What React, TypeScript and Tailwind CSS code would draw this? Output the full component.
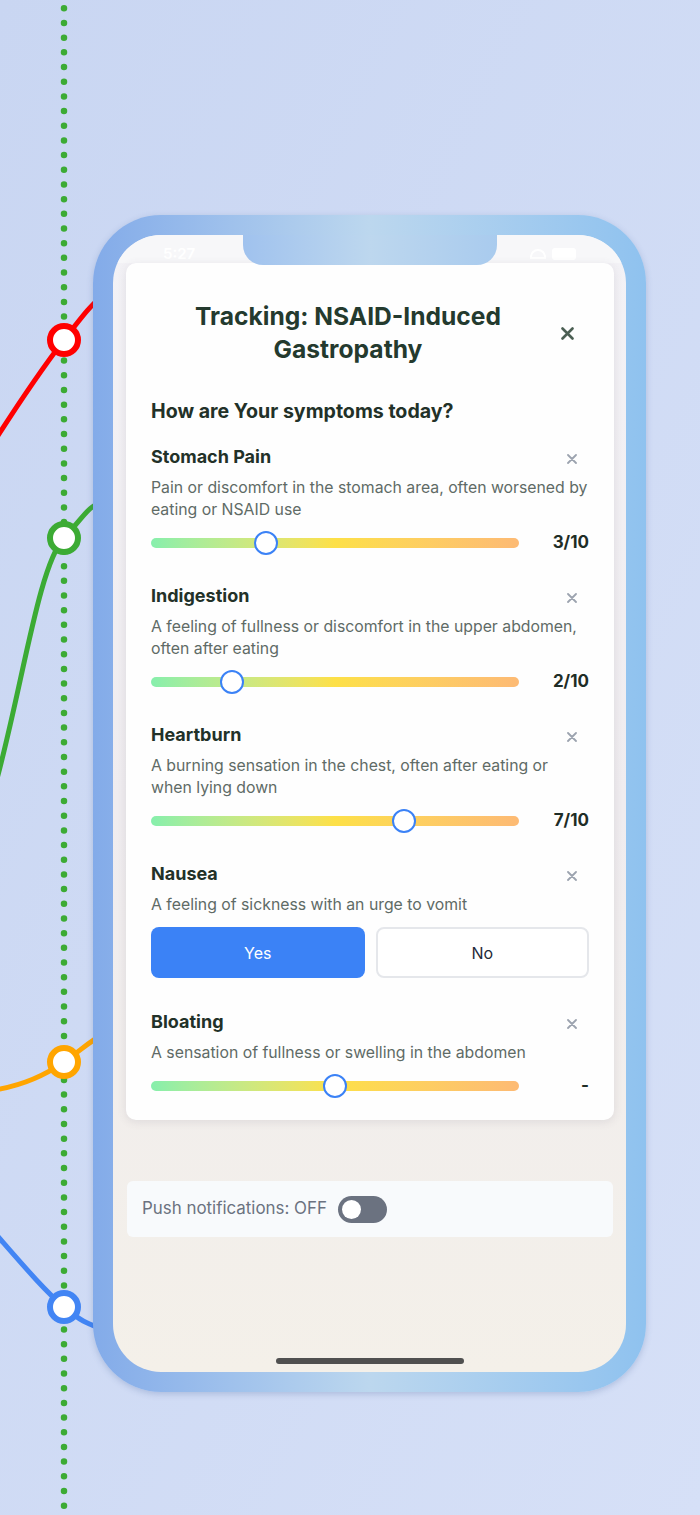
import React from 'react'

type Symptom = {
  name: string
  description: string
  kind: 'scale' | 'yesno'
  value: number | null
}

const symptoms: Symptom[] = [
  {
    name: 'Stomach Pain',
    description: 'Pain or discomfort in the stomach area, often worsened by eating or NSAID use',
    kind: 'scale',
    value: 3,
  },
  {
    name: 'Indigestion',
    description: 'A feeling of fullness or discomfort in the upper abdomen, often after eating',
    kind: 'scale',
    value: 2,
  },
  {
    name: 'Heartburn',
    description: 'A burning sensation in the chest, often after eating or when lying down',
    kind: 'scale',
    value: 7,
  },
  {
    name: 'Nausea',
    description: 'A feeling of sickness with an urge to vomit',
    kind: 'yesno',
    value: 1,
  },
  {
    name: 'Bloating',
    description: 'A sensation of fullness or swelling in the abdomen',
    kind: 'scale',
    value: null,
  },
]

const SmallX = () => (
  <svg width="10" height="10" viewBox="0 0 10 10" className="block">
    <path d="M1 1L9 9M9 1L1 9" stroke="#9ca3af" strokeWidth="1.8" strokeLinecap="round" />
  </svg>
)

const Backdrop = () => (
  <svg className="absolute inset-0" width="700" height="1515" viewBox="0 0 700 1515">
    <g fill="none" strokeWidth="5" strokeLinecap="round">
      <path d="M-10 448 C 18 404, 44 366, 64 340 S 90 306, 110 288" stroke="#ff0000" />
      <path d="M-6 790 C 22 690, 38 566, 64 538 S 86 506, 110 500" stroke="#3cab34" />
      <path d="M-6 1090 C 20 1086, 44 1076, 64 1062 S 88 1042, 110 1030" stroke="#ffa500" />
      <path d="M-6 1232 C 22 1264, 44 1290, 64 1307 S 90 1324, 110 1332" stroke="#4285f4" />
    </g>
    <line x1="64" y1="8.3" x2="64" y2="1515" stroke="#3cab34" strokeWidth="6.5" strokeLinecap="round" strokeDasharray="0 14.68" />
    <g fill="#ffffff" strokeWidth="6">
      <circle cx="64" cy="340" r="14" stroke="#ff0000" />
      <circle cx="64" cy="538" r="14" stroke="#3cab34" />
      <circle cx="64" cy="1062" r="14" stroke="#ffa500" />
      <circle cx="64" cy="1307" r="14" stroke="#4285f4" />
    </g>
  </svg>
)

function Slider({ value }: { value: number | null }) {
  const v = value ?? 5
  return (
    <div className="flex items-center mt-[10px] h-[24px]">
      <div className="relative flex-1 h-[10px] rounded-full bg-linear-to-r from-[#86efac] via-[#fde047] to-[#fdba74]">
        <div
          className="absolute top-1/2 w-[24px] h-[24px] -translate-x-1/2 -translate-y-1/2 rounded-full bg-white border-2 border-[#3b82f6]"
          style={{ left: `calc(12px + ${v / 10} * (100% - 24px))` }}
        />
      </div>
      <div className="w-[70px] text-right text-[17px] font-bold text-[#1f2d26]">
        {value === null ? '-' : `${value}/10`}
      </div>
    </div>
  )
}

function SymptomRow({ symptom }: { symptom: Symptom }) {
  return (
    <div className="flex flex-col">
      <div className="flex items-center justify-between h-[24px]">
        <span className="text-[18px] leading-[24px] font-bold text-[#223128]">{symptom.name}</span>
        <span className="mr-[12px] mt-[4px]">
          <SmallX />
        </span>
      </div>
      <p className="mt-[8px] text-[15.8px] leading-[22px] text-[#5f6b66]">{symptom.description}</p>
      {symptom.kind === 'scale' ? (
        <Slider value={symptom.value} />
      ) : (
        <div className="grid grid-cols-2 gap-[11px] mt-[11px] mb-[3px]">
          <button className="h-[51px] rounded-[8px] bg-[#3b82f6] text-white text-[16px]">Yes</button>
          <button className="h-[51px] rounded-[8px] bg-white border-2 border-[#e5e7eb] text-[16px] text-[#1f2937]">
            No
          </button>
        </div>
      )}
    </div>
  )
}

export default function App() {
  return (
    <div
      className="relative w-[700px] h-[1515px] overflow-hidden bg-linear-to-br from-[#c9d6f2] to-[#d6e0f7]"
      style={{ fontFamily: 'Inter, "Noto Sans", sans-serif' }}
    >
      <Backdrop />

      <div className="relative pt-[215px] pl-[93px]">
        {/* Phone frame */}
        <div className="w-[553px] h-[1177px] rounded-[68px] p-[20px] bg-linear-to-r from-[#83abe9] via-[#bcd7ee] to-[#8fc2ef] shadow-[0_2px_6px_rgba(60,90,150,0.25)]">
          <div className="relative flex flex-col h-full rounded-[48px] overflow-hidden bg-linear-to-b from-[#f3f2f6] via-[#efecef] to-[#f4f0e9]">
            {/* notch */}
            <div className="absolute top-0 left-[130px] w-[254px] h-[30px] rounded-b-[20px] bg-linear-to-r from-[#a0c2ee] via-[#bdd7ee] to-[#a9cbee] z-10" />

            {/* status bar */}
            <div className="flex items-center justify-between h-[28px] px-[50px] pt-[10px] bg-[#f7f7f9]">
              <span className="text-[15px] font-semibold text-white">5:27</span>
              <span className="flex items-center gap-[6px]">
                <span className="w-[16px] h-[10px] rounded-t-full border-2 border-white" />
                <span className="w-[24px] h-[12px] rounded-[3px] bg-white" />
              </span>
            </div>

            {/* tracking card */}
            <div className="ml-[13px] mr-[12px] rounded-[10px] bg-[#fefefe] shadow-[0_2px_10px_rgba(80,70,100,0.12)] px-[25px] pt-[37px] pb-[22px]">
              <div className="flex items-center">
                <h1 className="flex-1 text-center text-[24.6px] leading-[33px] font-bold text-[#243a2e]">
                  Tracking: NSAID-Induced
                  <br />
                  Gastropathy
                </h1>
                <span className="w-[44px] flex justify-center">
                  <svg width="13" height="13" viewBox="0 0 13 13">
                    <path d="M1.5 1.5L11.5 11.5M11.5 1.5L1.5 11.5" stroke="#4b5f53" strokeWidth="2.6" strokeLinecap="round" />
                  </svg>
                </span>
              </div>

              <h2 className="mt-[33px] text-[19.6px] leading-[24px] font-bold text-[#223128]">
                How are Your symptoms today?
              </h2>

              <div className="flex flex-col gap-[29px] mt-[22px]">
                {symptoms.map((s) => (
                  <SymptomRow key={s.name} symptom={s} />
                ))}
              </div>
            </div>

            {/* push notifications */}
            <div className="flex items-center gap-[11px] mt-[61px] ml-[14px] mr-[13px] h-[56px] px-[15px] rounded-[6px] bg-[#f8fafc]">
              <span className="text-[16.9px] text-[#6b7280]">Push notifications: OFF</span>
              <span className="flex items-center w-[49px] h-[27px] rounded-full bg-[#6b7280] px-[4px]">
                <span className="w-[19px] h-[19px] rounded-full bg-white" />
              </span>
            </div>

            <div className="mt-auto mb-[8px] mx-auto w-[188px] h-[6px] rounded-full bg-[#505050]" />
          </div>
        </div>
      </div>
    </div>
  )
}
